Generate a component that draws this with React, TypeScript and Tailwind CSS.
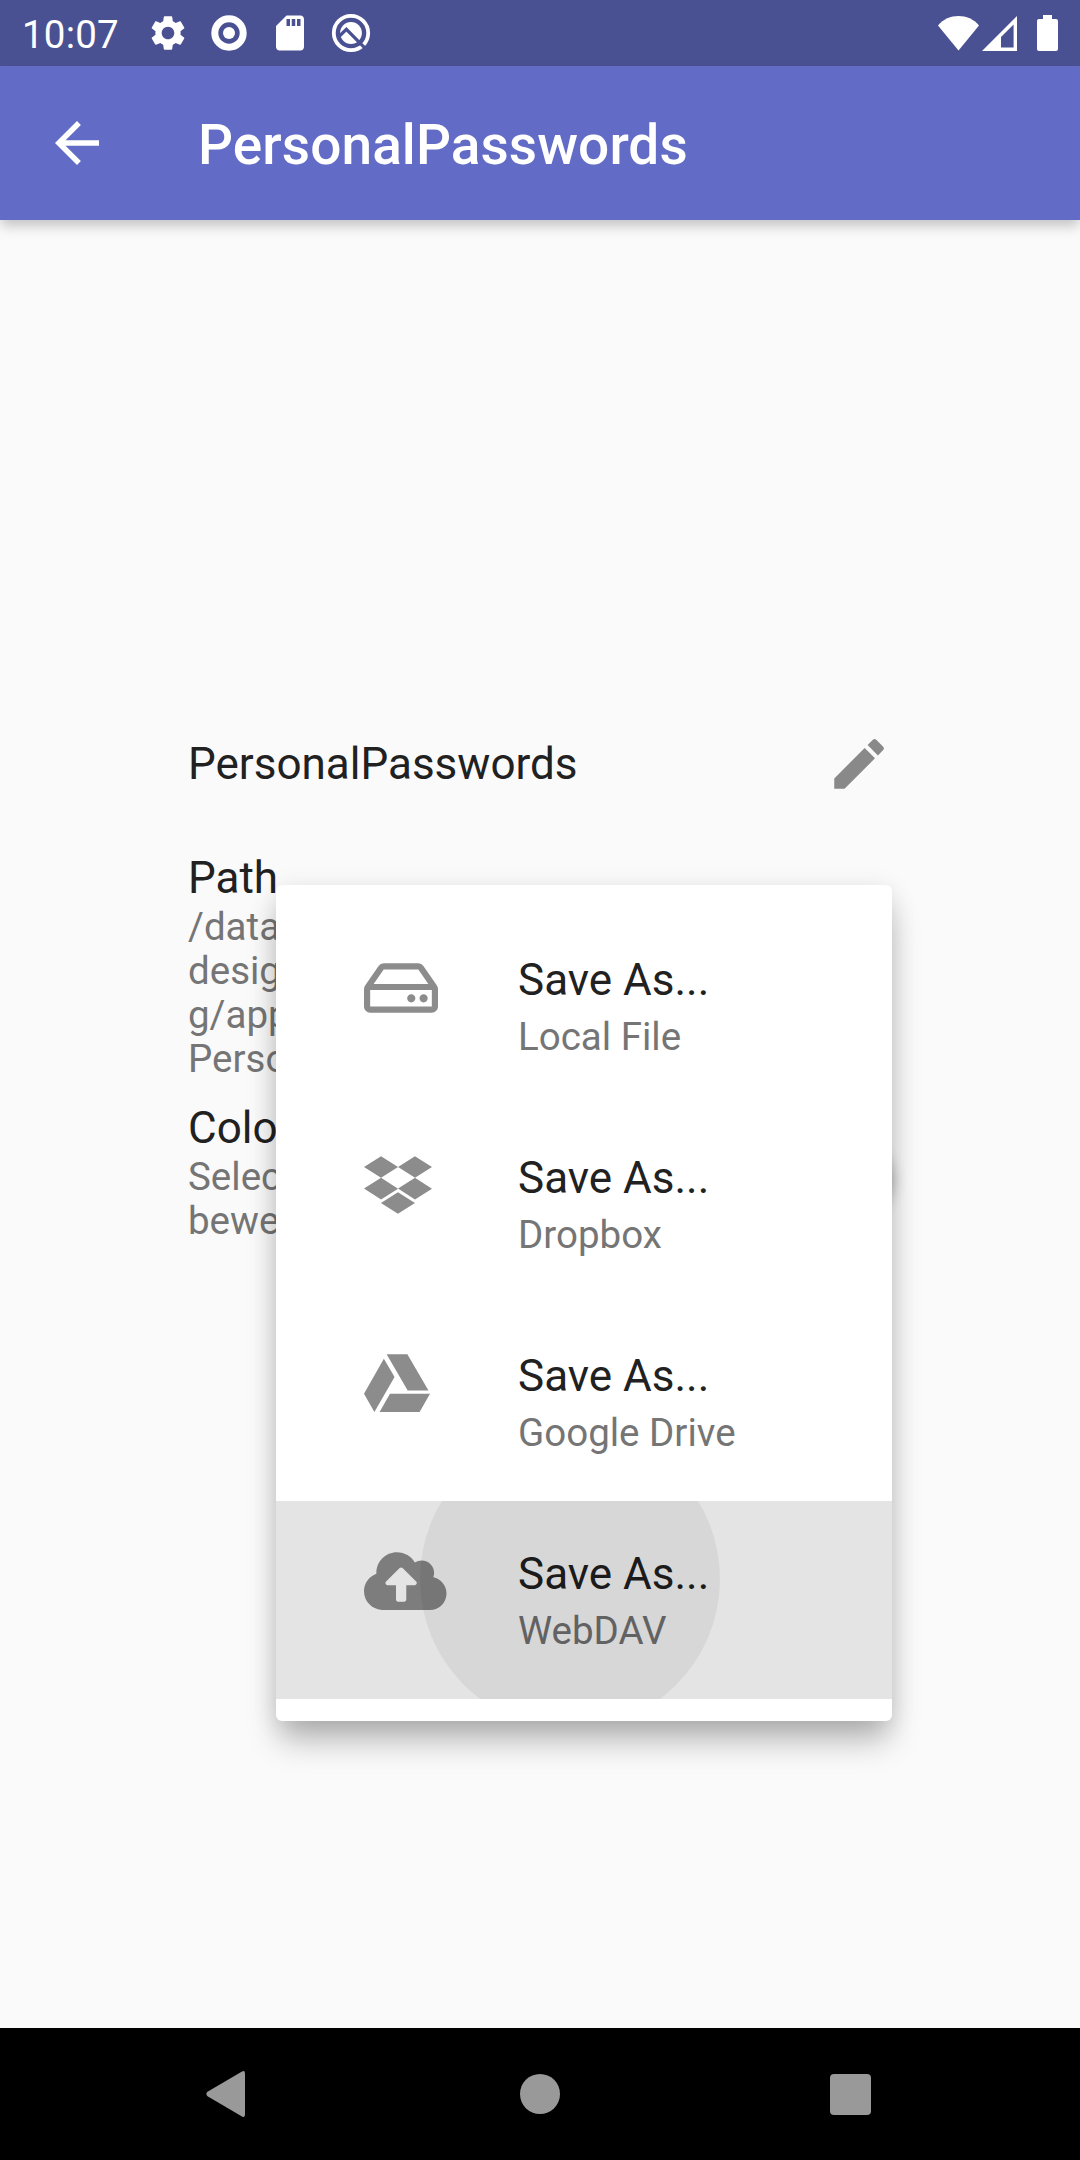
import type { ReactNode } from "react";
import { MdArrowBack, MdEdit, MdSdCard, MdSettings } from "react-icons/md";
import { FaCloudUploadAlt, FaDropbox, FaGoogleDrive, FaRegHdd } from "react-icons/fa";

function StatusBar() {
  return (
    <div className="flex h-[66px] items-center bg-[#4a5193] text-white">
      <span className="ml-[22px] w-[96px] pt-[2px] text-[38.5px] leading-[45px] tracking-[0.2px]">10:07</span>
      <MdSettings className="ml-[29px] size-[42px]" />
      <svg className="ml-[22px] size-9" viewBox="0 0 36 36" fill="none">
        <circle cx="18" cy="18" r="14.2" stroke="currentColor" strokeWidth="7" />
        <circle cx="18" cy="18" r="6" fill="currentColor" />
      </svg>
      <MdSdCard className="ml-[22px] size-[42px]" />
      <svg className="ml-[20px] size-10" viewBox="0 0 40 40" fill="none">
        <circle cx="20" cy="20" r="17.2" stroke="currentColor" strokeWidth="3.8" />
        <circle cx="20" cy="20" r="10.9" fill="currentColor" />
        <path d="M8.500 23L15.400 16.300L34.500 35.700" stroke="#4a5193" strokeWidth="3.2" />
      </svg>
      <svg className="ml-auto h-[35px] w-[41px]" viewBox="0 0 41 35" fill="currentColor">
        <path d="M0 9.5C5 3 13 0 20.5 0S36 3 41 9.5L20.5 34.5Z" />
      </svg>
      <svg className="ml-[3px] h-[35px] w-[35px]" viewBox="0 0 35 35" fill="currentColor">
        <path fillRule="evenodd" d="M35 0V35H0ZM31.6 8.5L19 21V31.4H31.6Z" />
      </svg>
      <svg className="mr-[22px] ml-5 h-9 w-[21px]" viewBox="0 0 21 36" fill="currentColor">
        <path d="M6 0H15V4H19Q21 4 21 6V34Q21 36 19 36H2Q0 36 0 34V6Q0 4 2 4H6Z" />
      </svg>
    </div>
  );
}

function AppBar() {
  return (
    <header className="relative z-10 flex h-[154px] items-center bg-[#626bc5] pl-11 text-white shadow-[0_7px_12px_-1px_rgba(0,0,0,0.22)]">
      <MdArrowBack className="size-[66px]" />
      <h1 className="ml-[88px] pt-[3px] text-[55px] leading-[64px] font-medium tracking-[0.06px]">PersonalPasswords</h1>
    </header>
  );
}

function Setting({ title, lines, children }: { title: string; lines: string[]; children?: ReactNode }) {
  return (
    <section className="flex items-center justify-between">
      <div>
        <h2 className="text-[44px] leading-[52px] text-[#212121]">{title}</h2>
        <div className="-mb-px pt-px">
          {lines.map((line) => (
            <p key={line} className="text-[38.5px] leading-[44px] text-[#757575]">
              {line}
            </p>
          ))}
        </div>
      </div>
      {children}
    </section>
  );
}

function MenuItem({ icon, label, pressed }: { icon: ReactNode; label: string; pressed?: boolean }) {
  return (
    <li className="relative flex h-[198px] items-start overflow-hidden pt-[47px] pl-[88px]">
      <div className="w-[154px] text-[#8c8c8c]">{icon}</div>
      <div>
        <p className="text-[44px] leading-[52px] text-[#212121]">Save As...</p>
        <p className="mt-2 text-[38.5px] leading-[45px] text-[#757575]">{label}</p>
      </div>
      {pressed && (
        <div className="absolute inset-0 bg-black/[0.106]">
          <div className="absolute -top-[72px] left-36 size-[300px] rounded-full bg-black/[0.055]" />
        </div>
      )}
    </li>
  );
}

function SaveMenu() {
  return (
    <ul className="absolute top-[885px] left-[276px] z-20 h-[836px] w-[616px] rounded-[6px] bg-white py-[22px] shadow-[0_23px_32px_-4px_rgba(0,0,0,0.27),0_4px_24px_rgba(0,0,0,0.1)]">
      <MenuItem icon={<FaRegHdd className="mt-px h-[66px] w-[74px]" />} label="Local File" />
      <MenuItem icon={<FaDropbox className="h-[66px] w-[68px]" />} label="Dropbox" />
      <MenuItem icon={<FaGoogleDrive className="size-[66px]" />} label="Google Drive" />
      <MenuItem icon={<FaCloudUploadAlt className="h-[66px] w-[82.5px]" />} label="WebDAV" pressed />
    </ul>
  );
}

function NavBar() {
  return (
    <nav className="flex h-[132px] items-center justify-between bg-black pr-[209px] pl-[206px] text-[#999]">
      <svg className="h-[46px] w-[39px]" viewBox="0 0 39 46" fill="currentColor">
        <path d="M36 .6Q39-1 39 2.500V43.500Q39 47 36 45.400L1.500 25.200Q-.8 23 1.500 20.800Z" />
      </svg>
      <div className="ml-[5px] size-10 rounded-full bg-[#999]" />
      <div className="size-[41px] rounded bg-[#999]" />
    </nav>
  );
}

export default function App() {
  return (
    <div className="relative flex h-[2160px] w-[1080px] flex-col overflow-hidden bg-[#fafafa] font-[Roboto,sans-serif]">
      <StatusBar />
      <AppBar />
      <main className="flex-1 px-[188px] pt-[511px]">
        <div className="flex h-[66px] items-center justify-between">
          <span className="text-[44px] leading-[52px] text-[#212121]">PersonalPasswords</span>
          <MdEdit className="size-[66px] text-[#898989]" />
        </div>
        <div className="mt-[55px] flex flex-col gap-[22px]">
          <Setting title="Path" lines={["/data/", "desig", "g/app", "Perso"]} />
          <Setting title="Color" lines={["Selec", "bewe"]}>
            <div className="mr-[2px] size-[66px] rounded-full bg-[#636bc5] shadow-[0_8px_16px_rgba(0,0,0,0.45)]" />
          </Setting>
        </div>
      </main>
      <NavBar />
      <SaveMenu />
    </div>
  );
}
